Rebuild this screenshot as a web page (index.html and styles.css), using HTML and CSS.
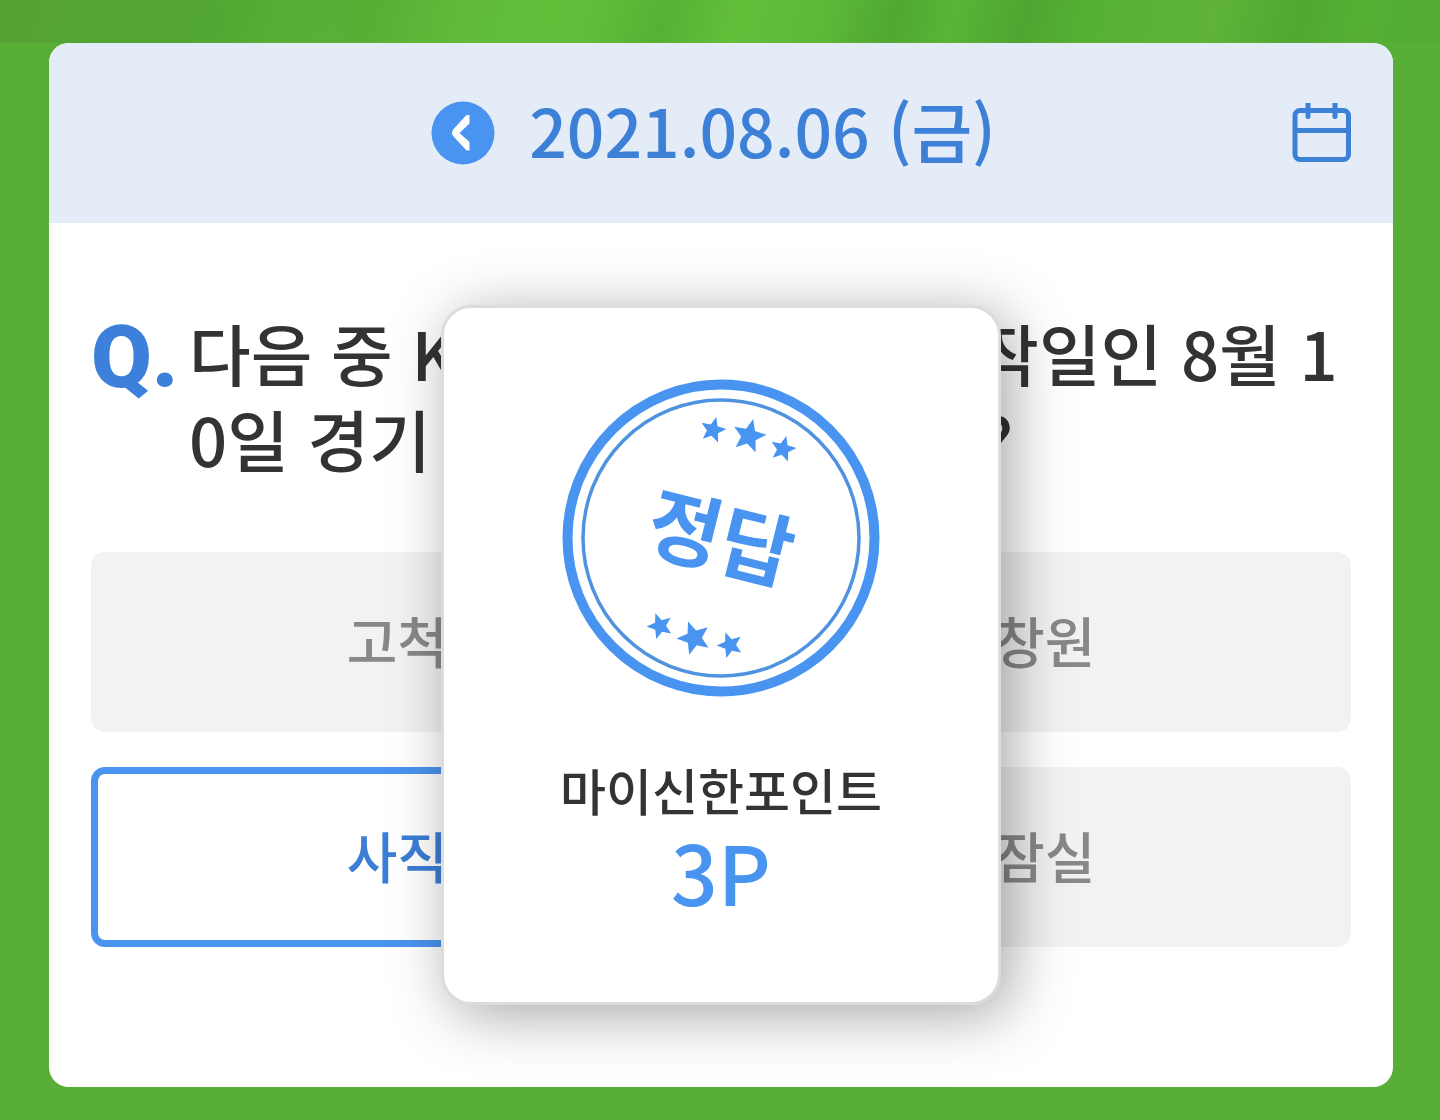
FILE: index.html
```html
<!DOCTYPE html>
<html lang="ko">
<head>
<meta charset="utf-8">
<meta name="viewport" content="width=device-width, initial-scale=1">
<title>야구 퀴즈</title>
<link rel="stylesheet" href="styles.css">
</head>
<body>
<div class="banner"></div>
<main class="card">
  <header class="date-bar">
    <div class="date-nav">
      <button class="icon-button" type="button" aria-label="이전 날짜">
        <svg width="64" height="64" viewBox="0 0 64 64"><circle cx="32" cy="32" r="31.500" fill="#4994f0"/><path d="M38.500 14v8.500L28.500 32 38.500 41v8.500h-3L23 36q-4-4 0-8.500L35.500 14z" fill="#fff"/></svg>
      </button>
      <time class="date" datetime="2021-08-06">2021.08.06 (금)</time>
    </div>
    <button class="icon-button calendar" type="button" aria-label="달력">
      <svg width="60" height="60" viewBox="0 0 60 60" fill="none" stroke="#3c80d8" stroke-width="5"><rect x="3" y="7.500" width="53.500" height="49" rx="5"/><path d="M3 27.500h53"/><path d="M16 0v13.500M43 0v13.500" stroke-linecap="round"/></svg>
    </button>
  </header>
  <section class="quiz">
    <div class="question">
      <span class="q-mark">Q.</span>
      <h1 class="question-text">다음 중 KBO 리그 후반기 시작일인 8월 10일 경기 개최지가 아닌 곳은?</h1>
    </div>
    <div class="answers">
      <button class="answer" type="button">고척</button>
      <button class="answer" type="button">창원</button>
      <button class="answer selected" type="button">사직</button>
      <button class="answer" type="button">잠실</button>
    </div>
  </section>
  <section class="result" role="dialog" aria-label="정답">
    <svg class="stamp" width="320" height="320" viewBox="0 0 320 320" fill="#4994f0">
      <defs><path id="star" d="M0-13.500L3.500-4.800 12.800-4.200 5.700 1.900 7.900 10.900 0 6 -7.900 10.900 -5.700 1.900 -12.800-4.200 -3.500-4.800z"/></defs>
      <circle cx="160" cy="160" r="153.500" fill="none" stroke="#4994f0" stroke-width="10"/>
      <circle cx="160" cy="160" r="138" fill="none" stroke="#4f93e0" stroke-width="3.500"/>
      <use href="#star" transform="translate(152 52) rotate(14)"/>
      <use href="#star" transform="translate(188 58) rotate(14) scale(1.300)"/>
      <use href="#star" transform="translate(222 71) rotate(14)"/>
      <use href="#star" transform="translate(99 248) rotate(-20)"/>
      <use href="#star" transform="translate(133 260) rotate(-20) scale(1.300)"/>
      <use href="#star" transform="translate(169 267) rotate(-20)"/>
      <text class="stamp-text" x="160" y="190" text-anchor="middle" transform="rotate(14 160 160)">정답</text>
    </svg>
    <p class="reward-name">마이신한포인트</p>
    <p class="reward-value">3P</p>
  </section>
</main>
</body>
</html>
```
FILE: styles.css
```css
* { box-sizing: border-box; }

body {
  margin: 0;
  padding-bottom: 33px;
  background: #58ae36;
  color: #333;
  font-family: "Noto Sans CJK KR", sans-serif;
  font-weight: 500;
}

.banner {
  height: 43px;
  background:
    linear-gradient(115deg, transparent 8%, #4da03160 16%, transparent 24%, #67c03b60 38%, transparent 46%),
    linear-gradient(105deg, #54a234 0%, #54a634 12%, #5ab237 20%, #56ae35 26%, #5eb938 32%, #60bd39 40%, #56b034 46%, #63be3a 51%, #5db838 57%, #50a832 62%, #58b436 66%, #4fa531 71%, #55b034 75%, #5eb338 84%, #50a832 90%, #56b034 94%, #53ab34 100%);
}

.card {
  position: relative;
  margin: 0 47px 0 49px;
  border-radius: 20px;
  background: #fff;
}

.date-bar {
  display: grid;
  grid-template-columns: 60px 1fr 60px;
  align-items: center;
  height: 180px;
  padding: 0 41px 0 42px;
  border-radius: 20px 20px 0 0;
  background: #e4ecf7;
}

.date-nav {
  grid-column: 2;
  display: flex;
  align-items: center;
  justify-content: center;
  gap: 34px;
  padding-right: 16px;
}

.date {
  padding-bottom: 8px;
  color: #3c80d8;
  font-size: 66px;
  line-height: 88px;
}

.icon-button {
  display: flex;
  padding: 0;
  border: 0;
  background: none;
}

.quiz { padding: 86px 42px 140px; }

.question {
  display: flex;
  align-items: flex-start;
}

.q-mark {
  flex: 0 0 98px;
  color: #3c80dc;
  font-family: Roboto, sans-serif;
  font-size: 88px;
  font-weight: 900;
  line-height: 96px;
}

.question-text {
  flex: 1;
  margin: 0;
  font-size: 67px;
  font-weight: 500;
  line-height: 86px;
  word-break: break-all;
}

.answers {
  display: grid;
  grid-template-columns: 1fr 1fr;
  gap: 35px;
  margin-top: 71px;
}

.answer {
  height: 180px;
  padding: 0 0 6px;
  border: 0;
  border-radius: 14px;
  background: #f2f2f2;
  color: #888;
  font: inherit;
  font-size: 55px;
}

.selected {
  border: 7px solid #4994f0;
  background: #fff;
  color: #3c7dd6;
}

.result {
  position: absolute;
  top: 262px;
  left: 50%;
  display: flex;
  flex-direction: column;
  align-items: center;
  width: 560px;
  height: 700px;
  margin-left: -280px;
  padding-top: 70px;
  border: 3px solid #dcdcdc;
  border-radius: 30px;
  background: #fff;
  box-shadow: 10px 10px 60px rgba(0, 0, 0, .35);
}

.stamp-text {
  font-size: 80px;
  font-weight: 700;
}

.reward-name {
  margin: 57px 0 0;
  font-size: 50px;
  line-height: 68px;
}

.reward-value {
  margin: 0;
  color: #4994f0;
  font-size: 82px;
  line-height: 96px;
}
```
